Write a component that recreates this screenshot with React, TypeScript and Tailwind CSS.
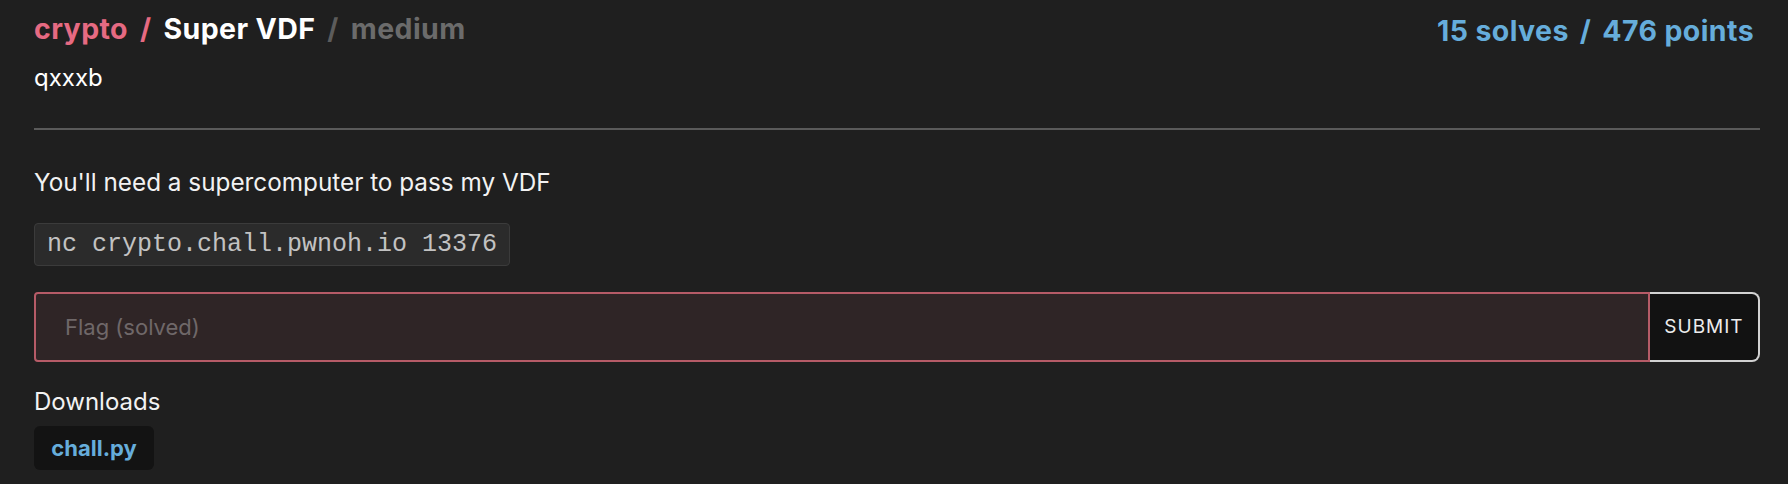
import React from "react";

export default function App() {
  return (
    <div
      className="min-h-[484px] w-full bg-[#1f1f1f] pl-[34px] pr-[28px] pt-[8px] text-white"
      style={{ fontFamily: "Inter, 'Noto Sans', sans-serif" }}
    >
      <div className="flex items-start justify-between">
        <h1 className="text-[28.5px] font-bold leading-[42px] tracking-[0.4px]">
          <span className="text-[#e66a82]">crypto</span>
          <span className="text-[#e66a82] mx-[12px]">/</span>
          <span className="text-white">Super VDF</span>
          <span className="text-[#5c5c5c] mx-[12px]">/</span>
          <span className="text-[#6b6b6b]">medium</span>
        </h1>
        <div className="pt-[2px] pr-[6px] text-[28.5px] font-bold leading-[42px] tracking-[0.4px] text-[#66addb]">
          15 solves<span className="mx-[11px]">/</span>476 points
        </div>
      </div>
      <div className="mt-[8px] text-[24px] leading-[36px] text-white">qxxxb</div>
      <div className="mt-[32px] h-[2px] bg-[#5a5a5a]" />
      <p className="mt-[34px] text-[24.3px] leading-[36px] text-[#f2f2f2]">
        You'll need a supercomputer to pass my VDF
      </p>
      <div className="mt-[23px] flex">
        <code
          className="flex h-[43px] items-center rounded-[4px] border border-[#3b3b3b] bg-[#2b2b2b] px-[12px] text-[25px] text-[#c2c2c2]"
          style={{ fontFamily: "'Liberation Mono', 'Courier New', monospace" }}
        >
          nc crypto.chall.pwnoh.io 13376
        </code>
      </div>
      <div className="mt-[26px] flex h-[70px]">
        <div className="flex flex-1 items-center rounded-l-[4px] border-2 border-[#b65b67] bg-[#2f2526] pl-[29px]">
          <span className="text-[22px] text-[#6f6869]">Flag (solved)</span>
        </div>
        <button className="flex w-[110px] items-center justify-center rounded-r-[8px] border-2 border-l-0 border-[#d2d2d2] bg-[#121212] text-[19px] tracking-[1px] text-[#ececec]">
          SUBMIT
        </button>
      </div>
      <div className="mt-[22px] text-[24px] leading-[36px] text-[#f2f2f2]">Downloads</div>
      <div className="mt-[6px] flex">
        <div className="flex h-[44px] w-[120px] items-center justify-center rounded-[6px] bg-[#131313] text-[22px] font-bold text-[#66addb]">
          chall.py
        </div>
      </div>
    </div>
  );
}
